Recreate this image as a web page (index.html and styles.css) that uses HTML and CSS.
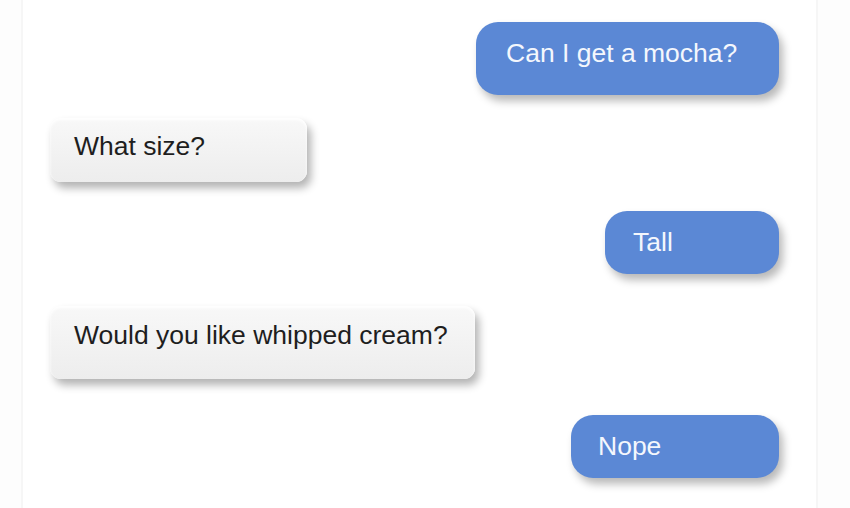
FILE: index.html
```html
<!DOCTYPE html>
<html lang="en">
<head>
    <meta charset="UTF-8">
    <meta name="viewport" content="width=device-width, initial-scale=1.0">
    <title>Coffee Chat</title>
    <link rel="stylesheet" href="styles.css">
</head>
<body>

    <div class="chat">
        <!-- customer on the right, barista on the left -->
        <div class="bubble sent msg-mocha">Can I get a mocha?</div>
        <div class="bubble received msg-size">What size?</div>
        <div class="bubble sent msg-tall">Tall</div>
        <div class="bubble received msg-cream">Would you like whipped cream?</div>
        <div class="bubble sent msg-nope">Nope</div>
    </div>

</body>
</html>
```

FILE: styles.css
```css
body {
    margin: 0;
    background-color: #fdfdfd;
    font-family: "Liberation Sans", Arial, sans-serif;
}

.chat {
    display: flex;
    flex-direction: column;
    background: white;
    margin-left: 21px;
    width: 797px;
    min-height: 508px;
    box-sizing: border-box;
    padding: 22px 37px 0 27px;
    border-left: 2px solid #f6f6f6;
    border-right: 2px solid #f6f6f6;
}

.bubble {
    box-sizing: border-box;
    font-size: 26.5px;
    line-height: 30px;
    white-space: nowrap;
}

.sent {
    align-self: flex-end;
    background-color: #5b88d5;
    color: #f4f7fd;
    border-radius: 22px;
    padding: 16px 28px 0;
    box-shadow: 4px 6px 9px rgba(0, 0, 0, 0.28);
}

.received {
    align-self: flex-start;
    background: linear-gradient(#f8f8f8, #ededed);
    color: #1e1e1e;
    border-radius: 11px;
    padding: 13px 24px 0;
    box-shadow: 4px 6px 9px rgba(0, 0, 0, 0.3), inset 0 2px 3px #ffffff;
}

.msg-mocha {
    width: 303px;
    height: 73px;
    padding-left: 30px;
}

.msg-size {
    width: 257px;
    height: 64px;
    margin-top: 23px;
}

.msg-tall {
    width: 174px;
    height: 63px;
    margin-top: 29px;
}

.msg-cream {
    width: 425px;
    height: 73px;
    margin-top: 32px;
    padding-top: 14px;
}

.msg-nope {
    width: 208px;
    height: 63px;
    margin-top: 36px;
    padding-left: 27px;
}
```
